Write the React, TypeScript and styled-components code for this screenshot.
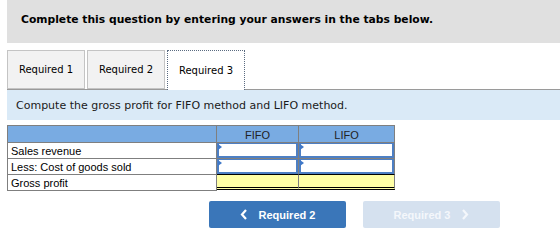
import React from "react";
import styled, { createGlobalStyle } from "styled-components";

const Global = createGlobalStyle`
  html, body { margin: 0; padding: 0; background: #ffffff; }
  body { width: 560px; height: 240px; overflow: hidden; }
`;

const Page = styled.div`
  padding-left: 7px;
  display: flex;
  flex-direction: column;
`;

const Header = styled.div`
  height: 43px;
  background: #e0e0e0;
  display: flex;
  align-items: center;
  padding-left: 14px;
  font-family: "DejaVu Sans", Verdana, sans-serif;
  font-weight: bold;
  font-size: 10.75px;
  color: #000;
  padding-bottom: 4px;
  box-sizing: border-box;
`;

const TabBar = styled.div`
  margin-top: 7px;
  display: flex;
  align-items: flex-end;
  gap: 2px;
  border-bottom: 1px solid #9a9a9a;
  height: 40px;
  box-sizing: border-box;
`;

const Tab = styled.div<{ $active?: boolean }>`
  width: 78px;
  height: ${(p) => (p.$active ? "40px" : "39px")};
  box-sizing: border-box;
  display: flex;
  align-items: center;
  justify-content: center;
  font-family: "DejaVu Sans", Verdana, sans-serif;
  font-size: 10px;
  color: #000;
  background: ${(p) => (p.$active ? "#ffffff" : "#f2f2f2")};
  border: ${(p) => (p.$active ? "1px dotted #5a6a80" : "1px solid #c4c4c4")};
  border-bottom: ${(p) => (p.$active ? "none" : "1px solid #c4c4c4")};
  margin-bottom: ${(p) => (p.$active ? "-1px" : "0")};
  padding-bottom: ${(p) => (p.$active ? "1px" : "0")};
`;

const Instruction = styled.div`
  height: 30px;
  background: #daeaf7;
  display: flex;
  align-items: center;
  padding-left: 9px;
  font-family: "DejaVu Sans", Verdana, sans-serif;
  font-size: 11px;
  color: #1a1a1a;
`;

const Table = styled.div`
  margin-top: 5px;
  display: grid;
  grid-template-columns: 210px 82px 96px;
  width: 388px;
  font-family: "Liberation Sans", Arial, sans-serif;
  font-size: 11px;
  color: #000;
`;

const HeadCell = styled.div<{ $first?: boolean }>`
  height: 18px;
  box-sizing: border-box;
  background: #79abe2;
  border-top: 1px solid #7f7f7f;
  border-left: ${(p) => (p.$first ? "1px solid #7f7f7f" : "none")};
  border-right: 1px solid #7f7f7f;
  border-bottom: 1px solid #7f7f7f;
  display: flex;
  align-items: center;
  justify-content: center;
  color: #222;
  padding-top: 1px;
`;

const LabelCell = styled.div`
  height: 16px;
  box-sizing: border-box;
  border-left: 1px solid #7f7f7f;
  border-right: 1px solid #7f7f7f;
  border-bottom: 1px solid #7f7f7f;
  display: flex;
  align-items: center;
  padding-left: 3px;
  padding-top: 1px;
`;

const InputCell = styled.div`
  height: 16px;
  box-sizing: border-box;
  border-right: 1px solid #7f7f7f;
  border-bottom: 1px solid #7f7f7f;
  padding: 0;
  display: flex;
`;

const InputBox = styled.div`
  position: relative;
  flex: 1;
  background: #fff;
  border: 2px solid #4d7fc4;
  border-top-width: 1px;
  box-sizing: border-box;
  &::before {
    content: "";
    position: absolute;
    left: -1px;
    top: 0;
    width: 0;
    height: 0;
    border-top: 3px solid transparent;
    border-bottom: 3px solid transparent;
    border-left: 4px solid #3f78c8;
  }
`;

const TotalCell = styled.div`
  height: 16px;
  box-sizing: border-box;
  background: #ffffa6;
  border-top: 1px solid #000;
  border-right: 1px solid #7f7f7f;
  border-bottom: 3px double #000;
  margin-top: -1px;
`;

const Buttons = styled.div`
  margin-top: 10px;
  margin-left: 202px;
  display: flex;
  gap: 17px;
`;

const NavButton = styled.div<{ $disabled?: boolean }>`
  width: 137px;
  height: 27px;
  border-radius: 2px;
  background: ${(p) => (p.$disabled ? "#d5e1ef" : "#3a76b9")};
  color: ${(p) => (p.$disabled ? "#f4f7fb" : "#ffffff")};
  display: flex;
  align-items: center;
  justify-content: center;
  gap: 11px;
  font-family: "Liberation Sans", Arial, sans-serif;
  font-weight: bold;
  font-size: 11px;
`;

const Chevron = ({ dir }: { dir: "left" | "right" }) => (
  <svg width="8" height="11" viewBox="0 0 8 11">
    <path
      d={dir === "left" ? "M6 1 L2 5.5 L6 10" : "M2 1 L6 5.5 L2 10"}
      fill="none"
      stroke="currentColor"
      strokeWidth="2.2"
    />
  </svg>
);

export default function App() {
  return (
    <>
      <Global />
      <Page>
        <Header>Complete this question by entering your answers in the tabs below.</Header>
        <TabBar>
          <Tab>Required 1</Tab>
          <Tab>Required 2</Tab>
          <Tab $active>Required 3</Tab>
        </TabBar>
        <Instruction>Compute the gross profit for FIFO method and LIFO method.</Instruction>
        <Table>
          <HeadCell $first />
          <HeadCell>FIFO</HeadCell>
          <HeadCell>LIFO</HeadCell>
          <LabelCell>Sales revenue</LabelCell>
          <InputCell><InputBox /></InputCell>
          <InputCell><InputBox /></InputCell>
          <LabelCell>Less: Cost of goods sold</LabelCell>
          <InputCell><InputBox /></InputCell>
          <InputCell><InputBox /></InputCell>
          <LabelCell>Gross profit</LabelCell>
          <TotalCell />
          <TotalCell />
        </Table>
        <Buttons>
          <NavButton>
            <Chevron dir="left" />
            <span>Required 2</span>
          </NavButton>
          <NavButton $disabled>
            <span>Required 3</span>
            <Chevron dir="right" />
          </NavButton>
        </Buttons>
      </Page>
    </>
  );
}
